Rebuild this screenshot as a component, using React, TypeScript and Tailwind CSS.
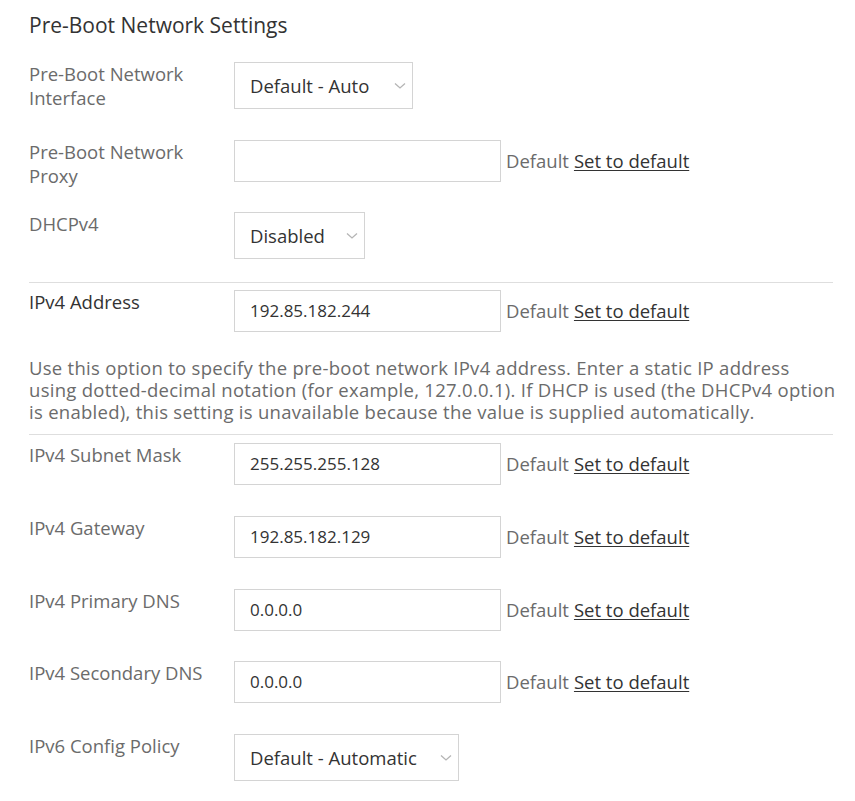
import React from "react";

const font = { fontFamily: "'Open Sans', Lato, sans-serif" };

function Chevron() {
  return (
    <svg width="12" height="8" viewBox="0 0 12 8" className="shrink-0">
      <path d="M1 1.5 L6 6 L11 1.5" fill="none" stroke="#b5b5b5" strokeWidth="1.3" />
    </svg>
  );
}

function Label({ children, dark }: { children: React.ReactNode; dark?: boolean }) {
  return (
    <div className={`w-[190px] shrink-0 text-[18.5px] leading-[24px] ${dark ? "text-[#333333]" : "text-[#6b6b6b]"}`}>
      {children}
    </div>
  );
}

function Row({ children, h, mt }: { children: React.ReactNode; h: string; mt: string }) {
  return <div className={`flex items-start gap-[15px] ${h} ${mt}`}>{children}</div>;
}

function Select({ value, width }: { value: string; width: string }) {
  return (
    <div className={`${width} h-[47px] border border-[#d4d4d4] bg-white flex items-center justify-between pl-[15px] pr-[6px] text-[18.5px] text-[#333333]`}>
      <span>{value}</span>
      <Chevron />
    </div>
  );
}

function TextInput({ value }: { value: string }) {
  return (
    <div className="flex items-center">
      <div className="w-[267px] h-[42px] border border-[#d4d4d4] bg-white flex items-center pl-[15px] text-[17px] text-[#333333]">
        {value}
      </div>
      <span className="ml-[5px] text-[18.5px] text-[#6b6b6b]">Default</span>
      <span className="ml-[5px] text-[18.5px] text-[#333333] underline underline-offset-[2px]">Set to default</span>
    </div>
  );
}

export default function App() {
  return (
    <div style={font} className="bg-white w-[855px] min-h-[801px] pl-[29px] pr-[22px] pt-[13px]">
      <h2 className="text-[21px] leading-[24px] text-[#333333]">Pre-Boot Network Settings</h2>

      <Row h="h-[47px]" mt="mt-[25px]">
        <Label>Pre-Boot Network Interface</Label>
        <Select value="Default - Auto" width="w-[179px]" />
      </Row>

      <Row h="h-[42px]" mt="mt-[31px]">
        <Label>Pre-Boot Network Proxy</Label>
        <TextInput value="" />
      </Row>

      <Row h="h-[47px]" mt="mt-[30px]">
        <Label>DHCPv4</Label>
        <Select value="Disabled" width="w-[131px]" />
      </Row>

      <div className="h-px bg-[#dedede] mt-[23px]" />

      <Row h="h-[42px]" mt="mt-[7px]">
        <Label dark>IPv4 Address</Label>
        <TextInput value="192.85.182.244" />
      </Row>

      <p className="mt-[25px] text-[18.5px] leading-[22px] tracking-[0.28px] text-[#6b6b6b] w-[812px]">
        Use this option to specify the pre-boot network IPv4 address. Enter a static IP address using dotted-decimal notation (for example, 127.0.0.1). If DHCP is used (the DHCPv4 option is enabled), this setting is unavailable because the value is supplied automatically.
      </p>

      <div className="h-px bg-[#dedede] mt-[11px]" />

      <Row h="h-[42px]" mt="mt-[8px]">
        <Label>IPv4 Subnet Mask</Label>
        <TextInput value="255.255.255.128" />
      </Row>

      <Row h="h-[42px]" mt="mt-[31px]">
        <Label>IPv4 Gateway</Label>
        <TextInput value="192.85.182.129" />
      </Row>

      <Row h="h-[42px]" mt="mt-[31px]">
        <Label>IPv4 Primary DNS</Label>
        <TextInput value="0.0.0.0" />
      </Row>

      <Row h="h-[42px]" mt="mt-[30px]">
        <Label>IPv4 Secondary DNS</Label>
        <TextInput value="0.0.0.0" />
      </Row>

      <Row h="h-[47px]" mt="mt-[31px]">
        <Label>IPv6 Config Policy</Label>
        <Select value="Default - Automatic" width="w-[225px]" />
      </Row>
    </div>
  );
}
